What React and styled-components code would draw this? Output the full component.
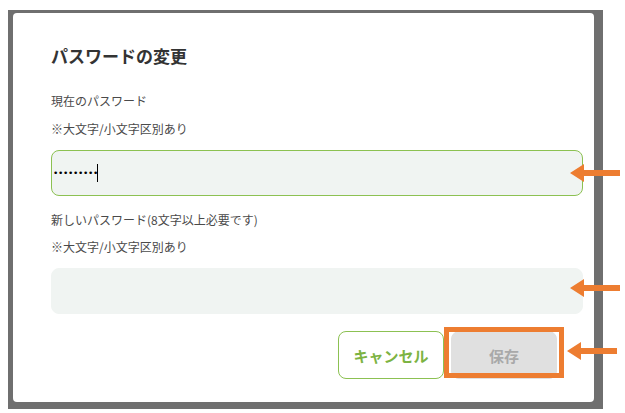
import styled, { createGlobalStyle } from 'styled-components';

const GlobalStyle = createGlobalStyle`
  html, body {
    margin: 0;
    background: #ffffff;
  }
  body {
    font-family: "Noto Sans CJK JP", "Noto Sans", sans-serif;
  }
`;

const ORANGE = '#ed7d31';
const GREEN = '#8cc152';

const Page = styled.div`
  position: relative;
  width: 625px;
  height: 413px;
  overflow: hidden;
`;

const Backdrop = styled.div`
  box-sizing: border-box;
  width: 595px;
  height: 399px;
  margin: 10px 0 0 8px;
  padding: 3px 9px 7px 5px;
  background: #6f6f6f;
`;

const Modal = styled.div`
  box-sizing: border-box;
  height: 100%;
  display: flex;
  flex-direction: column;
  padding: 31px 11px 24px 38px;
  background: #ffffff;
  border-radius: 4px;
`;

const Title = styled.h2`
  margin: 0;
  font-size: 17px;
  line-height: 24px;
  font-weight: 700;
  color: #333333;
`;

const FieldGroup = styled.div`
  display: flex;
  flex-direction: column;
  margin-top: ${(p) => p.$top}px;
`;

const Label = styled.div`
  font-size: 12px;
  line-height: 18px;
  color: #4a4a4a;
  margin-top: ${(p) => p.$top || 0}px;
`;

const InputBox = styled.div`
  position: relative;
  display: flex;
  margin-top: 12px;
`;

const Input = styled.input`
  box-sizing: border-box;
  width: 532px;
  height: 46px;
  padding: 0 1px;
  border: 1px solid ${(p) => (p.$focused ? GREEN : '#f0f4f2')};
  border-radius: 8px;
  background: #f0f4f2;
  font-family: "DejaVu Sans", sans-serif;
  font-size: 9px;
  letter-spacing: -0.3px;
  color: #000000;
  caret-color: #000000;
  outline: none;
`;

const Caret = styled.span`
  position: absolute;
  left: 46px;
  top: 14px;
  width: 1px;
  height: 18px;
  background: #000000;
`;

const ButtonRow = styled.div`
  display: flex;
  justify-content: flex-end;
  gap: 7px;
  margin-top: 17px;
  padding-right: 26px;
`;

const Button = styled.button`
  box-sizing: border-box;
  width: 106px;
  height: 48px;
  border-radius: 8px;
  font-family: "Noto Sans CJK JP", sans-serif;
  font-size: 15px;
  font-weight: 700;
  cursor: pointer;
  border: 1px solid ${(p) => (p.$primary ? '#e0e0e0' : GREEN)};
  background: ${(p) => (p.$primary ? '#e0e0e0' : '#ffffff')};
  color: ${(p) => (p.$primary ? '#a9a9a9' : '#7cb342')};
`;

const SaveWrap = styled.div`
  position: relative;
  display: flex;
`;

const Highlight = styled.div`
  position: absolute;
  left: -7px;
  top: -4px;
  width: 120px;
  height: 51px;
  box-sizing: border-box;
  border: 5px solid ${ORANGE};
  pointer-events: none;
`;

const Arrow = styled.svg`
  position: absolute;
  left: ${(p) => p.$x}px;
  top: ${(p) => p.$y - 9}px;
`;

const ArrowMark = ({ x, y }) => (
  <Arrow $x={x} $y={y} width="50" height="18" viewBox="0 0 50 18">
    <polygon
      points="0,9 14,0 14,6 50,6 50,12 14,12 14,18"
      fill={ORANGE}
    />
  </Arrow>
);

export default function App() {
  return (
    <>
      <GlobalStyle />
      <Page>
        <Backdrop>
          <Modal>
            <Title>パスワードの変更</Title>

            <FieldGroup $top={24}>
              <Label>現在のパスワード</Label>
              <Label $top={10}>※大文字/小文字区別あり</Label>
              <InputBox>
                <Input type="password" defaultValue="password1" $focused />
                <Caret />
              </InputBox>
            </FieldGroup>

            <FieldGroup $top={15}>
              <Label>新しいパスワード(8文字以上必要です)</Label>
              <Label $top={9}>※大文字/小文字区別あり</Label>
              <InputBox>
                <Input type="password" />
              </InputBox>
            </FieldGroup>

            <ButtonRow>
              <Button>キャンセル</Button>
              <SaveWrap>
                <Button $primary disabled>
                  保存
                </Button>
                <Highlight />
              </SaveWrap>
            </ButtonRow>
          </Modal>
        </Backdrop>

        <ArrowMark x={570} y={173} />
        <ArrowMark x={570} y={288} />
        <ArrowMark x={567} y={351} />
      </Page>
    </>
  );
}
